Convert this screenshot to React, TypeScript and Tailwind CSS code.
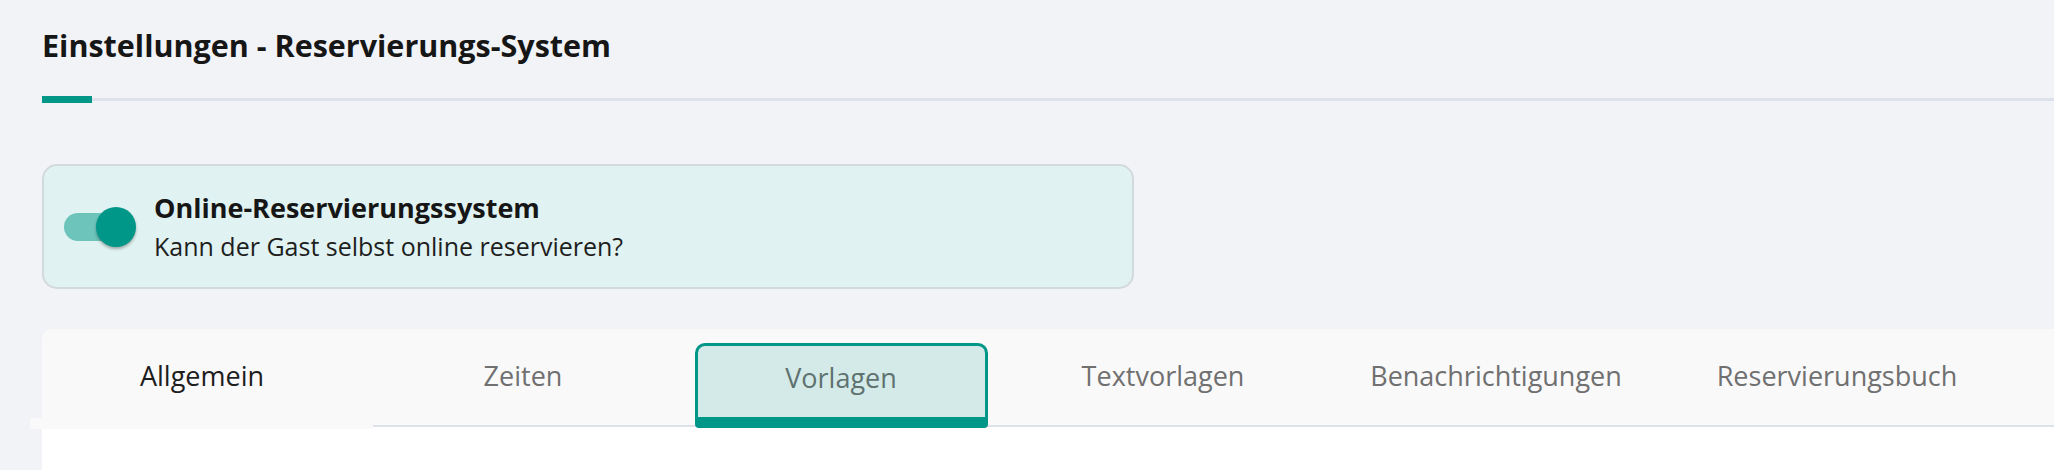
const tabs = [
  { label: "Allgemein", slot: "w-[320px]", tone: "text-[#1e1e1e]" },
  { label: "Zeiten", slot: "w-[322px]", tone: "text-[#707070]" },
  { label: "Vorlagen", slot: "w-[314px]", tone: "text-[#5f7270]", active: true },
  { label: "Textvorlagen", slot: "w-[330px]", tone: "text-[#707070]" },
  { label: "Benachrichtigungen", slot: "w-[336px]", tone: "text-[#707070]" },
  { label: "Reservierungsbuch", slot: "w-[346px]", tone: "text-[#707070]" },
];

const Toggle = () => (
  <div className="relative w-[72px] h-[40px] flex items-center shrink-0">
    <div className="w-[66px] h-[28px] rounded-full bg-[#6cc4bb]" />
    {/* knob sits over the track */}
    <div className="absolute right-0 top-0 w-[40px] h-[40px] rounded-full bg-[#009688] shadow-[0_2px_3px_rgba(0,0,0,0.3)]" />
  </div>
);

export default function App() {
  return (
    <div
      className="min-h-screen bg-[#f2f3f7] pl-[42px] overflow-hidden"
      style={{ fontFamily: "'Open Sans', 'Noto Sans', sans-serif" }}
    >
      {/* Page title */}
      <div className="pt-[27px]">
        <h1 className="text-[30.5px] leading-[36px] font-bold text-[#161616]">
          Einstellungen - Reservierungs-System
        </h1>
        <div className="flex items-center mt-[33px]">
          <div className="w-[50px] h-[7px] bg-[#009688]" />
          <div className="flex-1 h-[3px] bg-[#dde2ea]" />
        </div>
      </div>

      {/* Online booking switch */}
      <div className="mt-[61px] w-[1092px] h-[125px] rounded-[15px] border-2 border-[#d3dadb] bg-[#e0f2f1] flex items-center pl-[20px]">
        <Toggle />
        <div className="ml-[18px] flex flex-col">
          <span className="text-[27px] leading-[34px] font-bold text-[#161616]">
            Online-Reservierungssystem
          </span>
          <span className="mt-[5px] text-[25px] leading-[32px] text-[#1e1e1e]">
            Kann der Gast selbst online reservieren?
          </span>
        </div>
      </div>

      {/* Tabs */}
      <div className="mt-[40px] relative">
        <div className="absolute -left-[12px] top-[89px] w-[343px] h-[11px] bg-[#f9f9fa] z-10" />
        <div className="bg-[#f9f9fa] rounded-tl-[10px] border-b-2 border-[#dde1ea] h-[98px] flex items-end">
          {tabs.map((tab) => (
            <div key={tab.label} className={`${tab.slot} shrink-0 flex justify-center`}>
              <div
                className={
                  tab.active
                    ? "w-[293px] h-[85px] -mb-[3px] rounded-t-[10px] rounded-b-[4px] border-[3px] border-b-[11px] border-[#009688] bg-[#d3eae8] flex items-center justify-center pb-[8px]"
                    : "w-[293px] h-[85px] -mb-[3px] flex items-center justify-center pb-[19px]"
                }
              >
                <span className={`text-[27px] leading-[32px] ${tab.tone}`}>{tab.label}</span>
              </div>
            </div>
          ))}
        </div>
        <div className="bg-white h-[60px]" />
      </div>
    </div>
  );
}
